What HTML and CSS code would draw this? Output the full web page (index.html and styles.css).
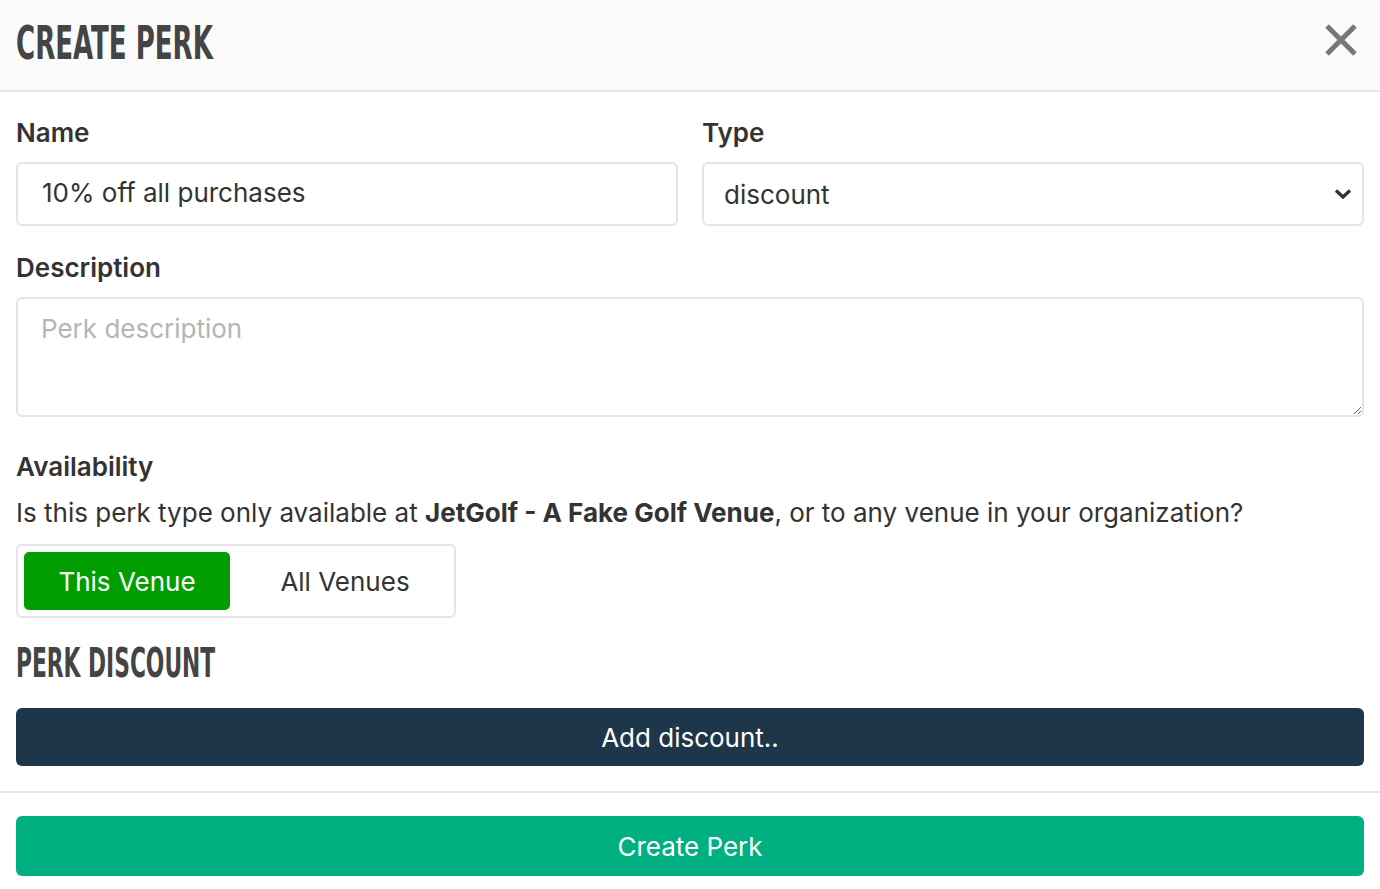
FILE: index.html
```html
<!DOCTYPE html>
<html lang="en">
<head>
<meta charset="utf-8">
<title>Create Perk</title>
<link rel="stylesheet" href="styles.css">
</head>
<body>
<div class="modal">
  <header class="modal-header">
    <h1 class="title"><span class="condensed">CREATE PERK</span></h1>
    <button class="close" aria-label="Close">
      <svg width="36" height="36" viewBox="0 0 36 36"><path d="M4 4 L32 32 M32 4 L4 32" stroke="#777" stroke-width="5" stroke-linecap="butt" fill="none"/></svg>
    </button>
  </header>
  <div class="modal-body">
    <div class="row">
      <div class="field">
        <label class="label">Name</label>
        <input class="input" type="text" value="10% off all purchases">
      </div>
      <div class="field">
        <label class="label">Type</label>
        <div class="select">
          <span>discount</span>
          <svg width="18" height="12" viewBox="0 0 18 12"><path d="M2 2.5 L9 9 L16 2.5" stroke="#333" stroke-width="3.4" fill="none" stroke-linejoin="miter"/></svg>
        </div>
      </div>
    </div>
    <div class="field field-desc">
      <label class="label">Description</label>
      <textarea class="textarea" placeholder="Perk description"></textarea>
    </div>
    <div class="field field-avail">
      <label class="label">Availability</label>
      <p class="help">Is this perk type only available at <strong>JetGolf - A Fake Golf Venue</strong>, or to any venue in your organization?</p>
      <div class="toggle">
        <button class="toggle-btn active">This Venue</button>
        <button class="toggle-btn">All Venues</button>
      </div>
    </div>
    <h2 class="section-title"><span class="condensed condensed-sm">PERK DISCOUNT</span></h2>
    <button class="btn-dark">Add discount..</button>
  </div>
  <footer class="modal-footer">
    <button class="btn-green">Create Perk</button>
  </footer>
</div>
</body>
</html>
```

FILE: styles.css
```css
* { box-sizing: border-box; }
html, body { margin: 0; padding: 0; background: #fff; }
body {
  font-family: Inter, "Noto Sans", sans-serif;
  color: #333;
  font-size: 26px;
}
.modal { width: 1380px; }
.modal-header {
  height: 92px;
  background: #fafafa;
  border-bottom: 2px solid #e5e5e5;
  display: flex;
  align-items: center;
  justify-content: space-between;
  padding: 0 16px;
}
.title, .section-title {
  margin: 0;
  font-family: "Liberation Sans Narrow", "DejaVu Sans Condensed", "Liberation Sans", sans-serif;
  font-weight: 700;
  color: #444;
  line-height: 1;
}
.condensed {
  display: inline-block;
  transform-origin: left center;
  transform: scaleX(0.63);
  white-space: nowrap;
}
.condensed-sm { transform: scaleX(0.605); }
.title { font-size: 46px; margin-top: -4px; }
.close {
  border: 0;
  background: transparent;
  padding: 0;
  width: 36px;
  height: 36px;
  margin-right: 5px;
  margin-top: -11px;
  display: flex;
}
.modal-body { padding: 26px 16px 25px; }
.row { display: grid; grid-template-columns: 1fr 1fr; gap: 24px; }
.field { display: flex; flex-direction: column; }
.label {
  font-weight: 600;
  line-height: 30px;
  margin-bottom: 14px;
  color: #333;
}
.input, .select, .textarea {
  border: 2px solid #e5e5e5;
  border-radius: 6px;
  background: #fff;
  font: inherit;
  color: #333;
}
.input {
  height: 64px;
  padding: 0 24px 3px;
  outline: none;
  width: 100%;
}
.select {
  height: 64px;
  padding: 0 10px 0 20px;
  display: flex;
  align-items: center;
  justify-content: space-between;
}
.select span { margin-top: 1px; }
.field-desc { margin-top: 27px; }
.field-avail { margin-top: 35px; }
.textarea {
  height: 120px;
  width: 100%;
  padding: 14px 23px;
  resize: vertical;
  outline: none;
  display: block;
}
.textarea::placeholder { color: #b5b5b5; }
.help { margin: 2px 0 16px; line-height: 30px; }
.help strong { font-weight: 700; }
.toggle {
  width: 440px;
  height: 74px;
  border: 2px solid #e5e5e5;
  border-radius: 6px;
  padding: 6px;
  display: grid;
  grid-template-columns: 206px 1fr;
}
.toggle-btn {
  font: inherit;
  border: 0;
  border-radius: 5px;
  background: transparent;
  color: #333;
  padding: 0;
}
.toggle-btn + .toggle-btn { padding-left: 12px; }
.toggle-btn.active { background: #009e00; color: #fff; }
.section-title { font-size: 40px; margin-top: 30px; height: 30px; display: flex; align-items: center; }
.btn-dark {
  margin-top: 30px;
  width: 100%;
  height: 58px;
  border: 0;
  border-radius: 6px;
  background: #1d3649;
  color: #fff;
  font: inherit;
}
.modal-footer {
  border-top: 2px solid #e5e5e5;
  padding: 23px 16px 13px;
}
.btn-green {
  width: 100%;
  height: 60px;
  border: 0;
  border-radius: 6px;
  background: #00b081;
  color: #fff;
  font: inherit;
}
```
